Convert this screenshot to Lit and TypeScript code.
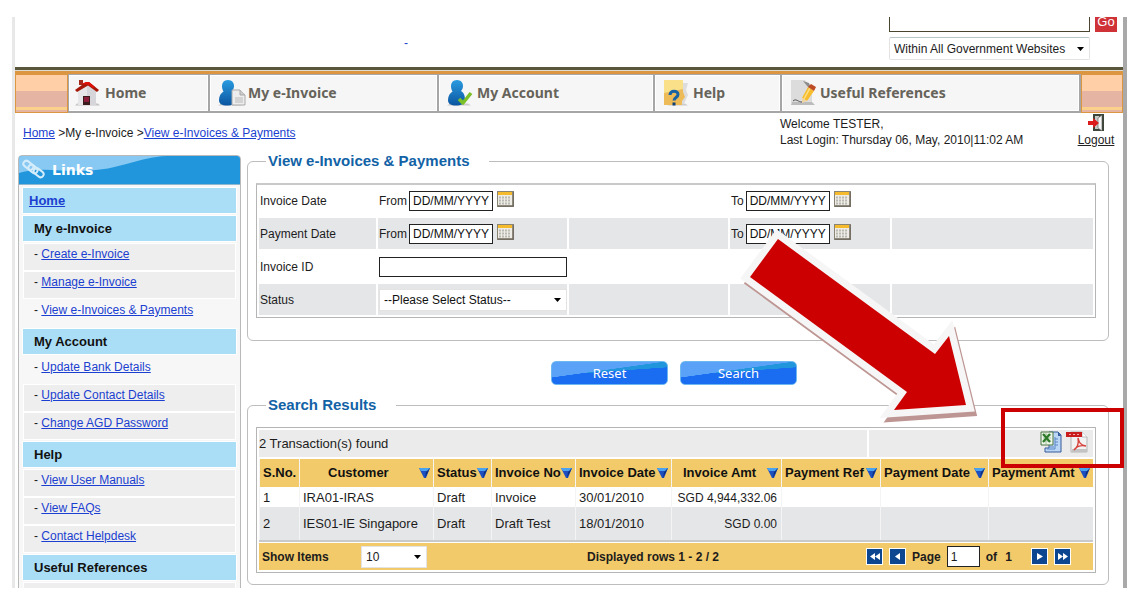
import { LitElement, html, svg, css } from "lit";
import { customElement, property } from "lit/decorators.js";

const homeIcon = html`<svg width="26" height="28" viewBox="0 0 26 28" aria-hidden="true">
  <path d="M1 26.500h25l-2-2H3z" fill="#c4c4c4"/>
  <path d="M4 12 13 5l9 7v14H4z" fill="#d6d6da"/>
  <path d="M4 12 13 5v21H4z" fill="#e6e6e8"/>
  <path d="M5 1h4v5H5z" fill="#a3291c"/>
  <path d="M1 11 12 3h3l10 8-2 2-9-6.500L3 13z" fill="#a51708"/>
  <path d="M7 5 12 3h3l6 5-2 1-5-3.500z" fill="#e00f08"/>
  <path d="M9 17h7v9H9z" fill="#3a1d1a"/><path d="M10 18h5v5h-5z" fill="#8b1c3a"/>
</svg>`;

const person = svg`<defs><linearGradient id="g" x1="0" y1="0" x2="0" y2="1">
    <stop offset="0" stop-color="#2a9be0"/><stop offset="1" stop-color="#0b55a0"/></linearGradient></defs>
  <path d="M0 26.500h24l-3-2H3z" fill="#cccccc"/>
  <path d="M10 1c4 0 6 2.800 6 6 0 2.200-1 4-2 5 3 1.500 4 5 4 9 0 4-4 5.500-9 5.500S1 25 1 21c0-4 2-7 4.500-8.500C4.500 11 4 9.200 4 7c0-3.200 2-6 6-6z" fill="url(#g)"/>`;

const invoiceIcon = html`<svg width="28" height="28" viewBox="0 0 28 28" aria-hidden="true">${person}
  <path d="M14 11h8l5 5v10H14z" fill="#ededed" stroke="#a9a9a9"/>
  <path d="M22 11v5h5" fill="#ccc" stroke="#a9a9a9"/>
  <path d="M17 19h8M17 21h8M17 23h8" stroke="#b9b9b9"/></svg>`;

const accountIcon = html`<svg width="28" height="28" viewBox="0 0 28 28" aria-hidden="true">${person}
  <path d="m12 20 4 4 8-10" fill="none" stroke="#7cc028" stroke-width="3.500" stroke-linejoin="round"/></svg>`;

const helpIcon = html`<svg width="28" height="28" viewBox="0 0 28 28" aria-hidden="true">
  <path d="M5 26.500h20l-3-2H5z" fill="#cccccc"/>
  <path d="M17 4h8l-2 7 2 5-4 9h-7z" fill="#dddddd"/>
  <path d="M1 1h19v12l2 5-3 4v4H1z" fill="#edbb58"/><path d="M1 1h19v9L1 14z" fill="#fbe08a"/>
  <path d="M7 16c0-5 8-5 8-.5 0 3-4 3-4 6" fill="none" stroke="#1763a5" stroke-width="3"/>
  <path d="M9.500 23.500h3v3h-3z" fill="#123f74"/></svg>`;

const refsIcon = html`<svg width="28" height="28" viewBox="0 0 28 28" aria-hidden="true">
  <path d="M1 1h14l7 8v15H1z" fill="#dcdcdc"/><path d="M1 26h24l-3-3H2z" fill="#bcbcbc"/>
  <path d="m13 2 6 2 2 5-3-1z" fill="#8c8c8c"/>
  <path d="m12 19 6-11 6 4-7 10z" fill="#f8bd2d"/><path d="m14 20 6-11" stroke="#fbe08a" stroke-width="1.500"/>
  <path d="m18 8 3-3 5 3-2 4z" fill="#bd4c25"/>
  <path d="m12 19 5 3-5 2z" fill="#eed5a4"/><path d="M3 22c3-3 5 1 9 1" stroke="#555" fill="none"/></svg>`;

const linkIcon = html`<svg width="24" height="22" viewBox="0 0 24 22" fill="none" stroke="#d5edfb" stroke-width="2" aria-hidden="true">
  <rect x="1" y="3" width="11" height="6" rx="3" transform="rotate(38 6 6)"/>
  <rect x="6" y="7" width="10" height="6" rx="3" transform="rotate(38 11 10)"/>
  <rect x="11" y="11" width="11" height="6" rx="3" transform="rotate(38 17 14)"/></svg>`;

const logoutIcon = html`<svg width="18" height="18" viewBox="0 0 18 18" aria-hidden="true">
  <path d="M6 0h11v17H6z" fill="#3d4438"/><path d="M8 2h4v13H8z" fill="#c8c8c8"/>
  <path d="m11 4 4-3v16l-4-3z" fill="#f6f6f6" stroke="#555" stroke-width=".6"/>
  <path d="M1 7h5V4l6 5-6 5v-3H1z" fill="#dc1c1c"/></svg>`;

const calendarIcon = html`<svg width="17" height="16" viewBox="0 0 17 16" aria-hidden="true">
  <path d="M0 0h17v16H0z" fill="#8a8474"/><path d="M1 1h15v14H1z" fill="#eeece4"/>
  <path d="M1 1h14v3H1z" fill="#f5bb2c"/>
  <path d="M2 6.500h12M2 9.500h12M2 12.500h12" stroke="#b9b9b4" stroke-width="2" stroke-dasharray="2 1"/>
  <path d="M16 1v14H1" stroke="#6d685c" stroke-width="1.500" fill="none"/></svg>`;

const excelIcon = html`<svg width="22" height="22" viewBox="0 0 22 22" aria-hidden="true">
  <path d="M9 1h9l3 3v17H5v-4h4z" fill="#bcd6f6" stroke="#345b9b"/>
  <path d="M18 1v4h3" fill="#345b9b"/>
  <path d="M7 18h8V6M15 8h3M15 11h3M15 14h3M9 16h5" stroke="#5b87c6" fill="none"/>
  <path d="M1 1h12v13H1z" fill="#eef5e9" stroke="#4b7542"/>
  <path d="M3 4h8M3 7h8M3 10h8M6 2v11" stroke="#a8c69d"/>
  <path d="m3 3 7 8M10 3l-7 8" stroke="#2d7a2b" stroke-width="2.200"/></svg>`;

const pdfIcon = html`<svg width="22" height="22" viewBox="0 0 22 22" aria-hidden="true">
  <path d="M5 1h11l5 5v15H5z" fill="#f2f2f2" stroke="#b5b5b5"/><path d="M6 18h15v3H6z" fill="#c3c3c3"/>
  <path d="M16 1v5h5" fill="#fff" stroke="#bbb"/>
  <path d="M0 1h16v5H0z" fill="#c91c1c"/><path d="M3 3.500h2M7 3.500h2M11 3.500h2" stroke="#f3a9a9"/>
  <path d="M12 7c1 4 2 7 8 8-5-1-9 0-12 4 3-2 5-6 4-12z" fill="none" stroke="#d8413b" stroke-width="1.400"/></svg>`;

const sortIcon = html`<svg width="11" height="11" viewBox="0 0 11 11" aria-hidden="true">
  <path d="M0 0h11L7 10H5z" fill="#1d4fc0"/><path d="M0 0h11L9 3H2z" fill="#4aa3f0"/><path d="m6 10 5-10-4 4z" fill="#0e2f7c"/></svg>`;

const pagerShapes: Record<string, string> = {
  first: "M9 5v7L4 8.500zM14 5v7L9 8.500z",
  prev: "M11 5v7L6 8.500z",
  next: "M6 5v7l6-3.500z",
  last: "M4 5v7l5-3.500zM9 5v7l5-3.500z",
};

@customElement("pager-button")
class PagerButton extends LitElement {
  @property() kind = "first";
  static styles = css`
    :host { display: block; }
    .btn { display: block; width: 17px; height: 17px; padding: 0; border: 1px solid #fff; background: #0d4690; }
    svg { display: block; width: 15px; height: 15px; }
  `;
  render() {
    return html`<button class="btn" type="button" aria-label="${this.kind} page">
      <svg viewBox="1 1 15 15"><path d=${pagerShapes[this.kind]} fill="#fff"/></svg></button>`;
  }
}

@customElement("app-root")
class AppRoot extends LitElement {
  static styles = css`
    :host { display: block; background: #fff; color: #1c1c1c; font: 12px/16px "Liberation Sans", Arial, sans-serif; }
    * { box-sizing: border-box; }
    svg { display: block; flex: none; }
    a { color: #1b3fd0; }
    .page { position: relative; height: 100vh; padding: 17px 18px 13px 12px; overflow: hidden; }
    .frame { height: 100%; overflow: hidden; border-left: 3px solid #e8e8e8; border-right: 4px solid #a9a9a9; }

    input, select, button { font: inherit; color: inherit; margin: 0; border-radius: 0; }
    input { border: 1px solid #222; background: #fff; padding: 0 3px; height: 20px; }
    select {
      appearance: none; height: 22px; border: 1px solid #e3e3e3; padding: 0 16px 0 4px;
      background: #fff url("data:image/svg+xml,%3Csvg xmlns='http://www.w3.org/2000/svg' width='7' height='4'%3E%3Cpath d='M0 0h7L3.500 4z'/%3E%3C/svg%3E") no-repeat right 5px center;
    }

    .top { height: 50px; display: flex; justify-content: space-between; align-items: flex-end; overflow: hidden; padding: 0 6px 7px 389px; }
    .top-link { text-decoration: none; padding-bottom: 9px; }
    .search { display: grid; grid-template-columns: 201px 22px; gap: 5px; }
    .search input { height: 15px; border: 1px solid #4a452f; border-top: 0; width: 100%; }
    .search select { height: 23px; border-top-color: #b8c6cc; border-radius: 2px; }
    .go { height: 15px; border: 0; padding: 0; background: #cf3237; color: #fff; font-size: 13px; line-height: 10px; padding-bottom: 5px; }

    .nav { display: grid; grid-template-columns: 53fr 142fr 229fr 216fr 127fr 299fr 42fr; border-top: 3px solid #5a563c; }
    .nav::before { content: ""; grid-column: 1 / -1; height: 3px; background: #dc9541; border-top: 1px solid #dcdcd0; }
    .stripe { border: 1px solid #dc9541; background: linear-gradient(#ffd0a8 16px, #e6b4a3 16px 32px, #fbd08a 32px 35px, #e6b4a3 35px); }
    .tab {
      display: flex; align-items: center; gap: 2px; height: 39px; padding: 0 8px 1px;
      background: #f6f6f6; border: 1px solid #a6a6a6; border-width: 1px 2px 2px 0; box-shadow: inset 0 0 0 1px #fff;
      font: bold 14px/18px "Noto Sans", sans-serif; color: #66635a; text-decoration: none; white-space: nowrap;
    }
    .tab:nth-child(2) { border-left-width: 1px; gap: 5px; padding-left: 5px; }

    .info { display: flex; height: 39px; padding: 3px 0 0 8px; }
    .crumbs { flex: 1; padding-top: 9px; white-space: nowrap; }
    .welcome { width: 289px; }
    .logout { width: 54px; display: flex; flex-direction: column; align-items: center; margin-top: -2px; color: #222; }

    .body { display: flex; gap: 6px; padding: 0 14px 0 3px; height: 100%; }
    .side { width: 223px; flex: none; margin-top: 3px; border: 1px solid #b9b9b9; border-radius: 4px 4px 0 0; background: #f7f7f7; }
    .side-head { position: relative; display: flex; align-items: center; gap: 6px; height: 29px; padding-left: 3px; background: #2196dc; border-radius: 3px 3px 0 0; border-bottom: 1px solid #8fb6cc; overflow: hidden; }
    .side-head h2 { margin: 0; font: bold 14px/18px "DejaVu Sans", sans-serif; color: #fff; }
    .side-head > * { position: relative; }
    .side-head .wave { position: absolute; left: 0; top: 0; }
    .menu { padding: 2px 3px; }
    .menu h3, .menu li { border: 1px solid #fff; }
    .menu h3 { margin: 0 0 1px; height: 27px; padding-left: 11px; font-size: 13px; line-height: 25px; background: #aadef6; color: #111; }
    .menu .home { padding-left: 6px; }
    .menu ul { list-style: none; margin: 0 1px 1px; padding: 0; }
    .menu li { height: 28px; line-height: 20px; padding-left: 10px; background: #eeeeee; }
    .menu .here { background: #f7f7f7; border-color: #f7f7f7; }

    .main { flex: 1; min-width: 0; }
    fieldset { margin: 0; min-width: 0; border: 1px solid #bdbdbd; border-radius: 6px; padding: 13px 12px 22px 8px; }
    .results { padding-bottom: 11px; }
    legend { margin-left: 10px; padding: 0 20px 0 2px; font-weight: bold; font-size: 15px; line-height: 18px; color: #1262a6; }
    .box { border: 1px solid #b5b5b5; padding: 2px; }
    .grid { border-top: 2px solid #c9c9c9; padding-top: 0; display: grid; grid-template-columns: 117fr 189fr 159fr 160fr 201fr; gap: 2px; }
    .cell { height: 31px; display: flex; align-items: center; gap: 2px; padding-left: 1px; white-space: nowrap; }
    .cell.alt { background: #e5e6e8; }
    .cell input, .cell select { color: #111; }
    .date { width: 84px; }
    .full { width: 100%; }
    .cal { border: 0; padding: 0; background: none; margin: 0 0 4px 2px; }
    .actions { display: flex; justify-content: center; gap: 12px; padding: 20px 8px 11px 0; }
    .action {
      width: 117px; height: 24px; border: 1px solid #6cb8ef; border-radius: 5px; padding: 0; color: #fff;
      background: linear-gradient(172deg, #5aa2f7 40%, transparent 41%), linear-gradient(176deg, #2196dc 44%, #1a6cf0 45%);
      font: 13px/20px "Noto Sans", sans-serif;
    }

    .bar { display: grid; grid-template-columns: 608fr 224fr; gap: 2px; margin-bottom: 2px; font-size: 13px; }
    .bar > div { height: 27px; background: #ebebeb; display: flex; align-items: center; }
    .bar .exports { justify-content: flex-end; gap: 4px; padding: 0 5px 4px 0; }
    .exports button { border: 0; background: none; padding: 0; }
    table { width: 100%; table-layout: fixed; border-collapse: separate; border-spacing: 0; font-size: 13px; border-bottom: 2px solid #c9c9c9; }
    th, td { padding: 0 3px; text-align: left; white-space: nowrap; border-left: 1px solid #f4f4f4; }
    th { background: #f2ca6a; height: 29px; border-bottom: 1px solid #fff; color: #111; }
    .c0 { width: 40px; } .c1 { width: 134px; } .c2 { width: 58px; } .c3 { width: 84px; } .c4 { width: 96px; }
    .c5 { width: 110px; } .c6 { width: 99px; } .c7 { width: 108px; } .c8 { width: 105px; }
    .th { display: flex; align-items: center; justify-content: space-between; }
    .mid { padding-left: 8px; }
    .mid.wide { padding-left: 25px; }
    .odd td { height: 19px; }
    .even td { height: 33px; background: #e5e6e8; }
    td.amt { text-align: right; padding-right: 4px; font-size: 12px; }
    .foot { display: grid; grid-template-columns: 324fr 134fr 351fr; align-items: center; height: 27px; margin-top: 1px; padding: 0 22px 0 3px; background: #f2ca6a; font-weight: bold; }
    .foot select { width: 66px; font-weight: normal; margin-left: 29px; }
    .rows { text-align: center; white-space: nowrap; }
    .pager { display: flex; align-items: center; justify-content: flex-end; gap: 6px; white-space: nowrap; }
    .pager label { display: flex; align-items: center; gap: 6px; }
    .pager input { width: 33px; height: 21px; font-weight: normal; }
    .of { margin-right: 13px; }
    .of b { margin-left: 5px; }

    .arrow { position: absolute; top: 225px; right: 160px; pointer-events: none; }
    .mark { position: absolute; top: 408px; right: 21px; width: 123px; height: 60px; border: 4px solid #cc0000; pointer-events: none; }
  `;

  groups = [
    { title: "My e-Invoice", items: ["Create e-Invoice", "Manage e-Invoice", "View e-Invoices & Payments"] },
    { title: "My Account", items: ["Update Bank Details", "Update Contact Details", "Change AGD Password"] },
    { title: "Help", items: ["View User Manuals", "View FAQs", "Contact Helpdesk"] },
  ];

  here = ["View e-Invoices & Payments", "Update Bank Details"];

  date(id: string, label: string) {
    return html`<label for=${id}>${label}</label><input class="date" id=${id} value="DD/MM/YYYY">
      <button class="cal" type="button" aria-label="Pick a date">${calendarIcon}</button>`;
  }

  render() {
    const heads = ["Customer", "Status", "Invoice No", "Invoice Date", "Invoice Amt", "Payment Ref", "Payment Date", "Payment Amt"];
    const mid: Record<string, string> = { Customer: "mid wide", "Invoice Amt": "mid" };
    const data = [
      ["1", "IRA01-IRAS", "Draft", "Invoice", "30/01/2010", "SGD 4,944,332.06", "", "", ""],
      ["2", "IES01-IE Singapore", "Draft", "Draft Test", "18/01/2010", "SGD 0.00", "", "", ""],
    ];
    return html`
      <div class="page">
        <div class="frame">
          <header class="top">
            <a class="top-link" href="#">-</a>
            <form class="search">
              <input type="text" aria-label="Search"><button class="go" type="button">Go</button>
              <select aria-label="Search scope"><option>Within All Government Websites</option></select>
            </form>
          </header>
          <nav class="nav">
            <span class="stripe"></span>
            <a class="tab" href="#">${homeIcon}Home</a>
            <a class="tab" href="#">${invoiceIcon}My e-Invoice</a>
            <a class="tab" href="#">${accountIcon}My Account</a>
            <a class="tab" href="#">${helpIcon}Help</a>
            <a class="tab" href="#">${refsIcon}Useful References</a>
            <span class="stripe"></span>
          </nav>
          <div class="info">
            <div class="crumbs"><a href="#">Home</a> &gt;My e-Invoice &gt;<a href="#">View e-Invoices &amp; Payments</a></div>
            <div class="welcome">Welcome TESTER,<br>Last Login: Thursday 06, May, 2010|11:02 AM</div>
            <a class="logout" href="#">${logoutIcon}Logout</a>
          </div>
          <div class="body">
            <aside class="side">
              <div class="side-head">
                <svg class="wave" width="148" height="29" viewBox="0 0 148 29"><path d="M0 0h148c-30 1-45 14-85 15-25 0-45-4-63 2z" fill="#87c9f2"/></svg>
                ${linkIcon}<h2>Links</h2>
              </div>
              <div class="menu">
                <h3 class="home"><a href="#">Home</a></h3>
                ${this.groups.map((g) => html`<h3>${g.title}</h3>
                  <ul>${g.items.map((i) => html`<li class=${this.here.includes(i) ? "here" : ""}>- <a href="#">${i}</a></li>`)}</ul>`)}
                <h3>Useful References</h3>
                <ul><li></li></ul>
              </div>
            </aside>
            <main class="main">
              <fieldset>
                <legend>View e-Invoices &amp; Payments</legend>
                <div class="box grid">
                  <div class="cell">Invoice Date</div><div class="cell">${this.date("i1", "From")}</div><div class="cell"></div><div class="cell">${this.date("i2", "To")}</div><div class="cell"></div>
                  <div class="cell alt">Payment Date</div><div class="cell alt">${this.date("p1", "From")}</div><div class="cell alt"></div><div class="cell alt">${this.date("p2", "To")}</div><div class="cell alt"></div>
                  <label class="cell" for="inv">Invoice ID</label><div class="cell"><input class="full" id="inv" type="text"></div><div class="cell"></div><div class="cell"></div><div class="cell"></div>
                  <label class="cell alt" for="st">Status</label><div class="cell alt"><select class="full" id="st"><option>--Please Select Status--</option></select></div><div class="cell alt"></div><div class="cell alt"></div><div class="cell alt"></div>
                </div>
              </fieldset>
              <div class="actions"><button class="action" type="button">Reset</button><button class="action" type="button">Search</button></div>
              <fieldset class="results">
                <legend>Search Results</legend>
                <div class="box">
                  <div class="bar"><div>2 Transaction(s) found</div>
                    <div class="exports"><button type="button" aria-label="Export to Excel">${excelIcon}</button><button type="button" aria-label="Export to PDF">${pdfIcon}</button></div></div>
                  <table>
                    <thead><tr><th class="c0">S.No.</th>${heads.map((h, i) => html`<th class="c${i + 1}"><div class="th"><span class=${mid[h] ?? ""}>${h}</span>${sortIcon}</div></th>`)}</tr></thead>
                    <tbody>${data.map((r, n) => html`<tr class=${n ? "even" : "odd"}>${r.map((c, i) => html`<td class=${i === 5 ? "amt" : ""}>${c}</td>`)}</tr>`)}</tbody>
                  </table>
                  <div class="foot">
                    <div><label for="n">Show Items</label> <select id="n"><option>10</option></select></div>
                    <div class="rows">Displayed rows 1 - 2 / 2</div>
                    <div class="pager">
                      <pager-button kind="first"></pager-button><pager-button kind="prev"></pager-button>
                      <label>Page <input value="1"></label><span class="of">of <b>1</b></span>
                      <pager-button kind="next"></pager-button><pager-button kind="last"></pager-button>
                    </div>
                  </div>
                </div>
              </fieldset>
            </main>
          </div>
        </div>
        <svg class="arrow" width="245" height="205" viewBox="740 225 245 205" stroke-miterlimit="10">
          <path d="M778 239 750 277 907 392 894 410 966 405 949 336 935 354Z" transform="translate(3 5)" fill="#bd9592" stroke="#bd9592" stroke-width="13"/>
          <path d="M778 239 750 277 907 392 894 410 966 405 949 336 935 354Z" fill="none" stroke="#f6f6f6" stroke-width="14"/>
          <path d="M778 239 750 277 907 392 894 410 966 405 949 336 935 354Z" fill="#cc0000"/>
        </svg>
        <div class="mark"></div>
      </div>`;
  }
}
